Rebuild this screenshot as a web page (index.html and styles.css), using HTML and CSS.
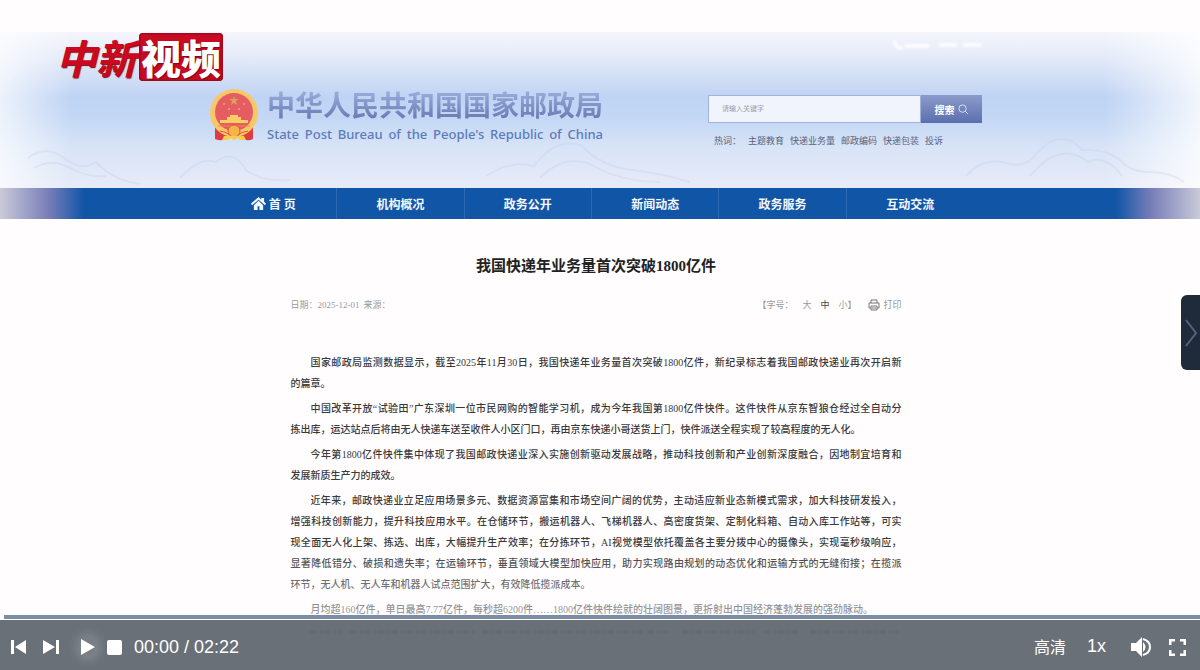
FILE: index.html
```
<!DOCTYPE html>
<html lang="zh-CN">
<head>
    <meta charset="UTF-8">
    <meta name="viewport" content="width=device-width, initial-scale=1.0">
    <title>中新视频</title>
    <link rel="stylesheet" href="styles.css">
</head>
<body>

<div class="player">
    <main class="video">
        <header class="site-header">
            <svg class="mountains" viewBox="0 0 1200 156" preserveAspectRatio="none" aria-hidden="true">
                <path d="M28 126 Q46 112 64 126 T96 130 Q112 148 140 152"/>
                <path d="M34 136 Q52 126 70 136 T106 144"/>
                <path d="M180 146 Q200 124 216 130 Q234 116 246 138 Q262 150 290 148"/>
                <path d="M486 144 Q510 128 534 134 Q556 104 582 114 Q600 134 632 138 T690 150"/>
                <path d="M540 146 Q564 122 590 132 Q620 150 660 150"/>
                <path d="M966 144 Q982 126 1002 130 Q1026 138 1036 122 Q1062 94 1082 118 Q1104 116 1120 128 Q1130 140 1150 140 T1184 150"/>
                <path d="M1030 144 Q1060 108 1088 130 Q1106 122 1122 144"/>
            </svg>

            <div class="header-wrap">
                <div class="brand">
                    <svg class="emblem" viewBox="0 0 48 52" aria-hidden="true">
                        <path d="M5 35 L5 50 Q12 53 17 49 L31 49 Q37 53 43 50 L43 35Z" fill="#dc3c43"/>
                        <circle cx="24" cy="24" r="24" fill="#f8c868"/>
                        <circle cx="24" cy="23" r="19" fill="#e55c63"/>
                        <path d="M24 7l1 3h4l-3 2 1 4-3-2-3 2 1-4-3-2h4z" fill="#d9a159"/>
                        <g fill="#edaa69">
                            <circle cx="14" cy="15" r="1"/>
                            <circle cx="34" cy="15" r="1"/>
                            <circle cx="19" cy="20" r="1"/>
                            <circle cx="29" cy="20" r="1"/>
                        </g>
                        <path d="M17 31v-3h3v-2h8v2h3v3h7v3H10v-3z" fill="#f9ce62"/>
                        <path d="M8 37h32" stroke="#ef8850"/>
                        <circle cx="24" cy="42" r="6" fill="#f5b44a" stroke="#e4553d"/>
                        <path d="M10 42q7 1 10 4M38 42q-7 1-10 4" stroke="#e4553d" fill="none"/>
                        <path d="M14 47h20l2 4h-6l-2-2-4 2-4-2-2 2h-6z" fill="#f7cd4a"/>
                    </svg>
                    <div class="brand-text">
                        <h2>中华人民共和国国家邮政局</h2>
                        <p>State Post Bureau of the People's Republic of China</p>
                    </div>
                </div>

                <div class="header-side">
                    <svg class="top-links" viewBox="0 0 90 12" aria-hidden="true">
                        <path d="M3 3q0 5 6 6M14 7h24M49 6h14M73 6h15" stroke="#fff" stroke-width="4" fill="none" stroke-linecap="round" stroke-dasharray="4 2"/>
                    </svg>
                    <form class="search">
                        <input type="text" placeholder="请输入关键字" aria-label="请输入关键字">
                        <button type="button">搜索
                            <svg viewBox="0 0 12 12" aria-hidden="true"><circle cx="5" cy="5" r="4"/><path d="M8 8l3 3"/></svg>
                        </button>
                    </form>
                    <div class="hot-words">
                        <span>热词：</span>
                        <a href="#">主题教育</a>
                        <a href="#">快递业务量</a>
                        <a href="#">邮政编码</a>
                        <a href="#">快递包装</a>
                        <a href="#">投诉</a>
                    </div>
                </div>
            </div>
        </header>

        <nav class="site-nav">
            <div class="nav-wrap">
                <a href="#">
                    <svg viewBox="0 0 16 14" aria-hidden="true"><path d="M8 0L0 7l1 2 7-6 7 6 1-2-2-2V1h-3v2zM8 4L3 9v5h4v-4h2v4h4V9z"/></svg>首 页</a>
                <a href="#">机构概况</a>
                <a href="#">政务公开</a>
                <a href="#">新闻动态</a>
                <a href="#">政务服务</a>
                <a href="#">互动交流</a>
            </div>
        </nav>

        <article class="article">
            <h1>我国快递年业务量首次突破1800亿件</h1>

            <div class="meta">
                <span>日期：</span>
                <span class="date">2025-12-01</span>
                <span>来源：</span>
                <span class="font-size">【字号：</span>
                <a href="#">大</a>
                <a href="#" class="current">中</a>
                <a href="#">小】</a>
                <a href="#" class="print">
                    <svg viewBox="0 0 12 12" aria-hidden="true"><path d="M3 4V1h6v3M3 9H1V4h10v5H9M3 7h6v4H3zM4 9h4"/></svg>打印</a>
            </div>

            <div class="content">
                <p>
                    <span class="full indent">国家邮政局监测数据显示，截至2025年11月30日，我国快递年业务量首次突破1800亿件，新纪录标志着我国邮政快递业再次开启新</span>
                    <span class="last">的篇章。</span>
                </p>
                <p>
                    <span class="full indent">中国改革开放“试验田”广东深圳一位市民网购的智能学习机，成为今年我国第1800亿件快件。这件快件从京东智狼仓经过全自动分</span>
                    <span class="last">拣出库，运达站点后将由无人快递车送至收件人小区门口，再由京东快递小哥送货上门，快件派送全程实现了较高程度的无人化。</span>
                </p>
                <p>
                    <span class="full indent">今年第1800亿件快件集中体现了我国邮政快递业深入实施创新驱动发展战略，推动科技创新和产业创新深度融合，因地制宜培育和</span>
                    <span class="last">发展新质生产力的成效。</span>
                </p>
                <p>
                    <span class="full indent">近年来，邮政快递业立足应用场景多元、数据资源富集和市场空间广阔的优势，主动适应新业态新模式需求，加大科技研发投入，</span>
                    <span class="full">增强科技创新能力，提升科技应用水平。在仓储环节，搬运机器人、飞梯机器人、高密度货架、定制化料箱、自动入库工作站等，可实</span>
                    <span class="full">现全面无人化上架、拣选、出库，大幅提升生产效率；在分拣环节，AI视觉模型依托覆盖各主要分拨中心的摄像头，实现毫秒级响应，</span>
                    <span class="full">显著降低错分、破损和遗失率；在运输环节，垂直领域大模型加快应用，助力实现路由规划的动态优化和运输方式的无缝衔接；在揽派</span>
                    <span class="last">环节，无人机、无人车和机器人试点范围扩大，有效降低揽派成本。</span>
                </p>
                <p>
                    <span class="last indent">月均超160亿件，单日最高7.77亿件，每秒超6200件……1800亿件快件绘就的壮阔图景，更折射出中国经济蓬勃发展的强劲脉动。</span>
                </p>
            </div>
        </article>

        <div class="channel-logo"><span class="logo-name">中新</span><span class="logo-box">视频</span></div>
    </main>

    <button class="side-toggle" type="button" aria-label="展开">
        <svg viewBox="0 0 14 28" aria-hidden="true"><path d="M2 1l10 13L2 27"/></svg>
    </button>

    <div class="progress"></div>

    <footer class="controls">
        <button type="button" aria-label="上一个"><svg width="16" height="14" viewBox="0 0 16 14"><path d="M0 0h3v14H0zM15 0v14L4 7z"/></svg></button>
        <button type="button" aria-label="下一个" class="next"><svg width="16" height="14" viewBox="0 0 16 14"><path d="M13 0h3v14h-3zM0 0v14l12-7z"/></svg></button>
        <button type="button" aria-label="播放" class="play"><svg width="14" height="16" viewBox="0 0 14 16"><path d="M0 0v16l14-8z"/></svg></button>
        <button type="button" aria-label="停止" class="stop"><svg width="15" height="15" viewBox="0 0 15 15"><rect width="15" height="15" rx="2"/></svg></button>
        <span class="time">00:00 / 02:22</span>
        <button type="button" class="quality">高清</button>
        <button type="button" class="speed">1x</button>
        <button type="button" aria-label="音量" class="volume">
            <svg width="20" height="20" viewBox="0 0 20 20"><path d="M0 6h5l6-6v20l-6-6H0z"/><path d="M12 5q5 5 0 10z"/><path d="M12 2q7 2 7 8t-7 8" fill="none" stroke="#fff" stroke-width="2"/></svg>
        </button>
        <button type="button" aria-label="全屏" class="fullscreen">
            <svg width="17" height="17" viewBox="0 0 17 17"><path d="M1 6V1h5M11 1h5v5M16 11v5h-5M6 16H1v-5" fill="none" stroke="#fff" stroke-width="3"/></svg>
        </button>

        <!-- what still shows of the next text line behind the bar -->
        <svg class="ghost-line" viewBox="0 0 612 4" aria-hidden="true"><path d="M20 2h32M60 2h126M192 2h160M358 2h22M392 2h72M474 2h34M520 2h88"/></svg>
    </footer>
</div>

</body>
</html>
```
FILE: styles.css
```
* {
    box-sizing: border-box;
}

body {
    margin: 0;
    font-family: "Liberation Serif", "Noto Sans CJK SC", sans-serif;
    color: #333;
    background-color: #fffdfe;
}

a {
    color: inherit;
    text-decoration: none;
}

button {
    border: none;
    padding: 0;
    cursor: pointer;
    font-family: inherit;
}

h1, h2, p {
    margin: 0;
}

.player {
    position: relative;
    display: flex;
    flex-direction: column;
    height: 100vh;
}

.video {
    position: relative;
    flex: 1;
    min-height: 0;
    overflow: hidden;
    padding-top: 32px;
}

/* the picture gets paler towards the controls */
.video::after {
    content: "";
    position: absolute;
    left: 0;
    right: 0;
    bottom: 0;
    height: 70px;
    background: linear-gradient(rgba(255, 253, 254, 0), rgba(255, 253, 254, 0.5));
}

/* header */
.site-header {
    position: relative;
    height: 156px;
    padding-right: 8px;
    background:
        linear-gradient(90deg, rgba(255, 255, 255, 0.7), rgba(255, 255, 255, 0) 6%, rgba(255, 255, 255, 0) 92%, rgba(255, 255, 255, 0.8)),
        linear-gradient(#f5f6fc, #dfe7f8 20%, #bfd3f4 42%, #c3d7f5 55%, #d9e4f7 75%, #e7ebf8);
}

.mountains {
    position: absolute;
    left: 0;
    top: 0;
    width: 100%;
    height: 100%;
    fill: none;
    stroke: #c5d1e8;
    stroke-width: 2;
    opacity: 0.35;
}

.header-wrap {
    position: relative;
    display: flex;
    justify-content: space-between;
    max-width: 772px;
    margin: 0 auto;
}

.brand {
    display: flex;
    gap: 9px;
    padding-top: 57px;
}

.emblem {
    width: 48px;
    height: 52px;
}

.brand-text h2 {
    font-family: "Noto Sans CJK SC", sans-serif;
    font-size: 28px;
    line-height: 30px;
    font-weight: 700;
    color: transparent;
    background: linear-gradient(#9db2de, #6b79b4);
    background-clip: text;
    -webkit-background-clip: text;
}

.brand-text p {
    font-family: "Noto Sans", sans-serif;
    font-size: 13px;
    line-height: 16px;
    margin-top: 7px;
    font-weight: 500;
    color: #5b7cba;
    text-align-last: justify;
    white-space: nowrap;
}

.header-side {
    display: flex;
    flex-direction: column;
    width: 274px;
    padding-top: 7px;
}

.top-links {
    width: 90px;
    height: 12px;
    align-self: flex-end;
    filter: blur(1px);
    opacity: 0.8;
}

.search {
    display: flex;
    height: 28px;
    margin-top: 44px;
}

.search input {
    flex: 1;
    min-width: 0;
    padding: 0 13px;
    border: 1px solid #a3b2dc;
    border-radius: 0;
    background-color: #f2f4fd;
    font-family: inherit;
    font-size: 7px;
}

.search input::placeholder {
    color: #9a9eab;
}

.search button {
    display: flex;
    align-items: center;
    justify-content: center;
    gap: 3px;
    width: 61px;
    font-size: 10px;
    font-weight: 700;
    color: #fff;
    background: linear-gradient(#8d9bca, #5a6fae);
}

.search svg {
    width: 11px;
    height: 11px;
    fill: none;
    stroke: #dde3f7;
}

.hot-words {
    display: flex;
    gap: 6px;
    padding: 11px 6px 0;
    font-size: 9px;
    line-height: 14px;
    color: #59627a;
    white-space: nowrap;
}

.hot-words span {
    margin-right: 1px;
}

/* main menu */
.site-nav {
    height: 31px;
    padding-right: 8px;
    background: linear-gradient(90deg, #c9cad8, #7a7fb9 4%, #1155a6 7%, #1155a6 93%, #7a7fb9 96%, #c9cad8);
}

.nav-wrap {
    display: grid;
    grid-template-columns: repeat(6, 1fr);
    max-width: 772px;
    height: 100%;
    margin: 0 auto;
    padding-right: 8px;
}

.nav-wrap a {
    display: flex;
    align-items: center;
    justify-content: center;
    gap: 3px;
    font-size: 12px;
    font-weight: 700;
    color: #f4f8ff;
    border-right: 1px solid #2a69b3;
}

.nav-wrap a:last-child {
    border-right: none;
}

.nav-wrap svg {
    width: 15px;
    height: 13px;
    fill: #f4f8ff;
}

/* article */
.article {
    max-width: 619px;
    margin: 0 auto;
    padding: 36px 8px 0 0;
}

.article h1 {
    font-size: 15px;
    line-height: 22px;
    text-align: center;
    color: #222;
}

.meta {
    display: flex;
    align-items: center;
    height: 16px;
    margin-top: 20px;
    font-size: 9px;
    line-height: 16px;
    color: #999;
}

.date {
    margin-right: 4px;
}

.font-size {
    margin-left: auto;
    margin-right: 9px;
}

.meta a {
    margin-right: 9px;
}

.meta .current {
    color: #444;
}

.meta .print {
    display: flex;
    align-items: center;
    gap: 3px;
    margin: 0 0 0 3px;
}

.print svg {
    width: 12px;
    height: 12px;
    fill: none;
    stroke: #777;
}

.content {
    margin-top: 39px;
    font-size: 10px;
    line-height: 21px;
    font-weight: 500;
    color: #3a3a3c;
}

.content p {
    margin-bottom: 4px;
}

.content span {
    display: block;
    white-space: nowrap;
}

.content .full {
    white-space: normal;
    text-align: justify;
    text-align-last: justify;
}

.content .indent {
    padding-left: 20px;
}

/* channel logo over the picture */
.channel-logo {
    position: absolute;
    left: 56px;
    top: 33px;
    display: flex;
    align-items: center;
    gap: 3px;
    font-family: "Noto Sans CJK SC", sans-serif;
    font-size: 40px;
    line-height: 48px;
    font-weight: 900;
}

.logo-name {
    font-style: italic;
    font-weight: 700;
    color: #cc0820;
    text-shadow: 1px 1px 1px #7d0715;
}

.logo-box {
    padding: 0 2px;
    border-radius: 4px;
    color: #fff;
    background-color: #c80a22;
    box-shadow: inset 0 0 2px 1px #96081a;
    text-shadow: 1px 1px 1px #7d0715;
}

.side-toggle {
    position: absolute;
    right: 0;
    top: 295px;
    display: flex;
    align-items: center;
    justify-content: flex-end;
    width: 19px;
    height: 75px;
    padding-right: 2px;
    border-radius: 6px 0 0 6px;
    background-color: #1f2b3b;
}

.side-toggle svg {
    width: 14px;
    height: 28px;
    fill: none;
    stroke: #52637d;
    stroke-width: 2;
}

/* player controls */
.progress {
    height: 5px;
    border-left: 4px solid #fff;
    border-bottom: 1px solid #fff;
    background-color: #7b8ca7;
}

.controls {
    position: relative;
    display: flex;
    align-items: center;
    height: 50px;
    padding: 4px 14px 0 11px;
    font-family: "Liberation Sans", "Noto Sans CJK SC", sans-serif;
    font-size: 18px;
    color: #fff;
    background-color: #6a7078;
}

.controls button {
    display: flex;
    align-items: center;
    background: none;
    color: #fff;
}

.controls svg {
    fill: #fff;
}

.controls .next {
    margin-left: 16px;
}

.controls .play {
    margin-left: 22px;
    border-radius: 50%;
    background-color: rgba(255, 255, 255, 0.1);
    box-shadow: 0 0 10px 6px rgba(255, 255, 255, 0.15);
}

.controls .stop {
    margin-left: 12px;
}

.time {
    margin-left: 12px;
}

.controls .quality {
    margin-left: auto;
    padding-bottom: 3px;
    font-size: 16px;
}

.controls .speed {
    margin-left: 21px;
    padding-bottom: 2px;
    font-size: 18px;
}

.controls .volume {
    margin-left: 25px;
}

.controls .fullscreen {
    margin-left: 18px;
}

.controls .ghost-line {
    position: absolute;
    top: 10px;
    left: calc(50% - 310px);
    width: 612px;
    height: 4px;
    fill: none;
    stroke: #5f656f;
    stroke-width: 2;
    stroke-dasharray: 6 3 3 2;
    filter: blur(1px);
}
```
